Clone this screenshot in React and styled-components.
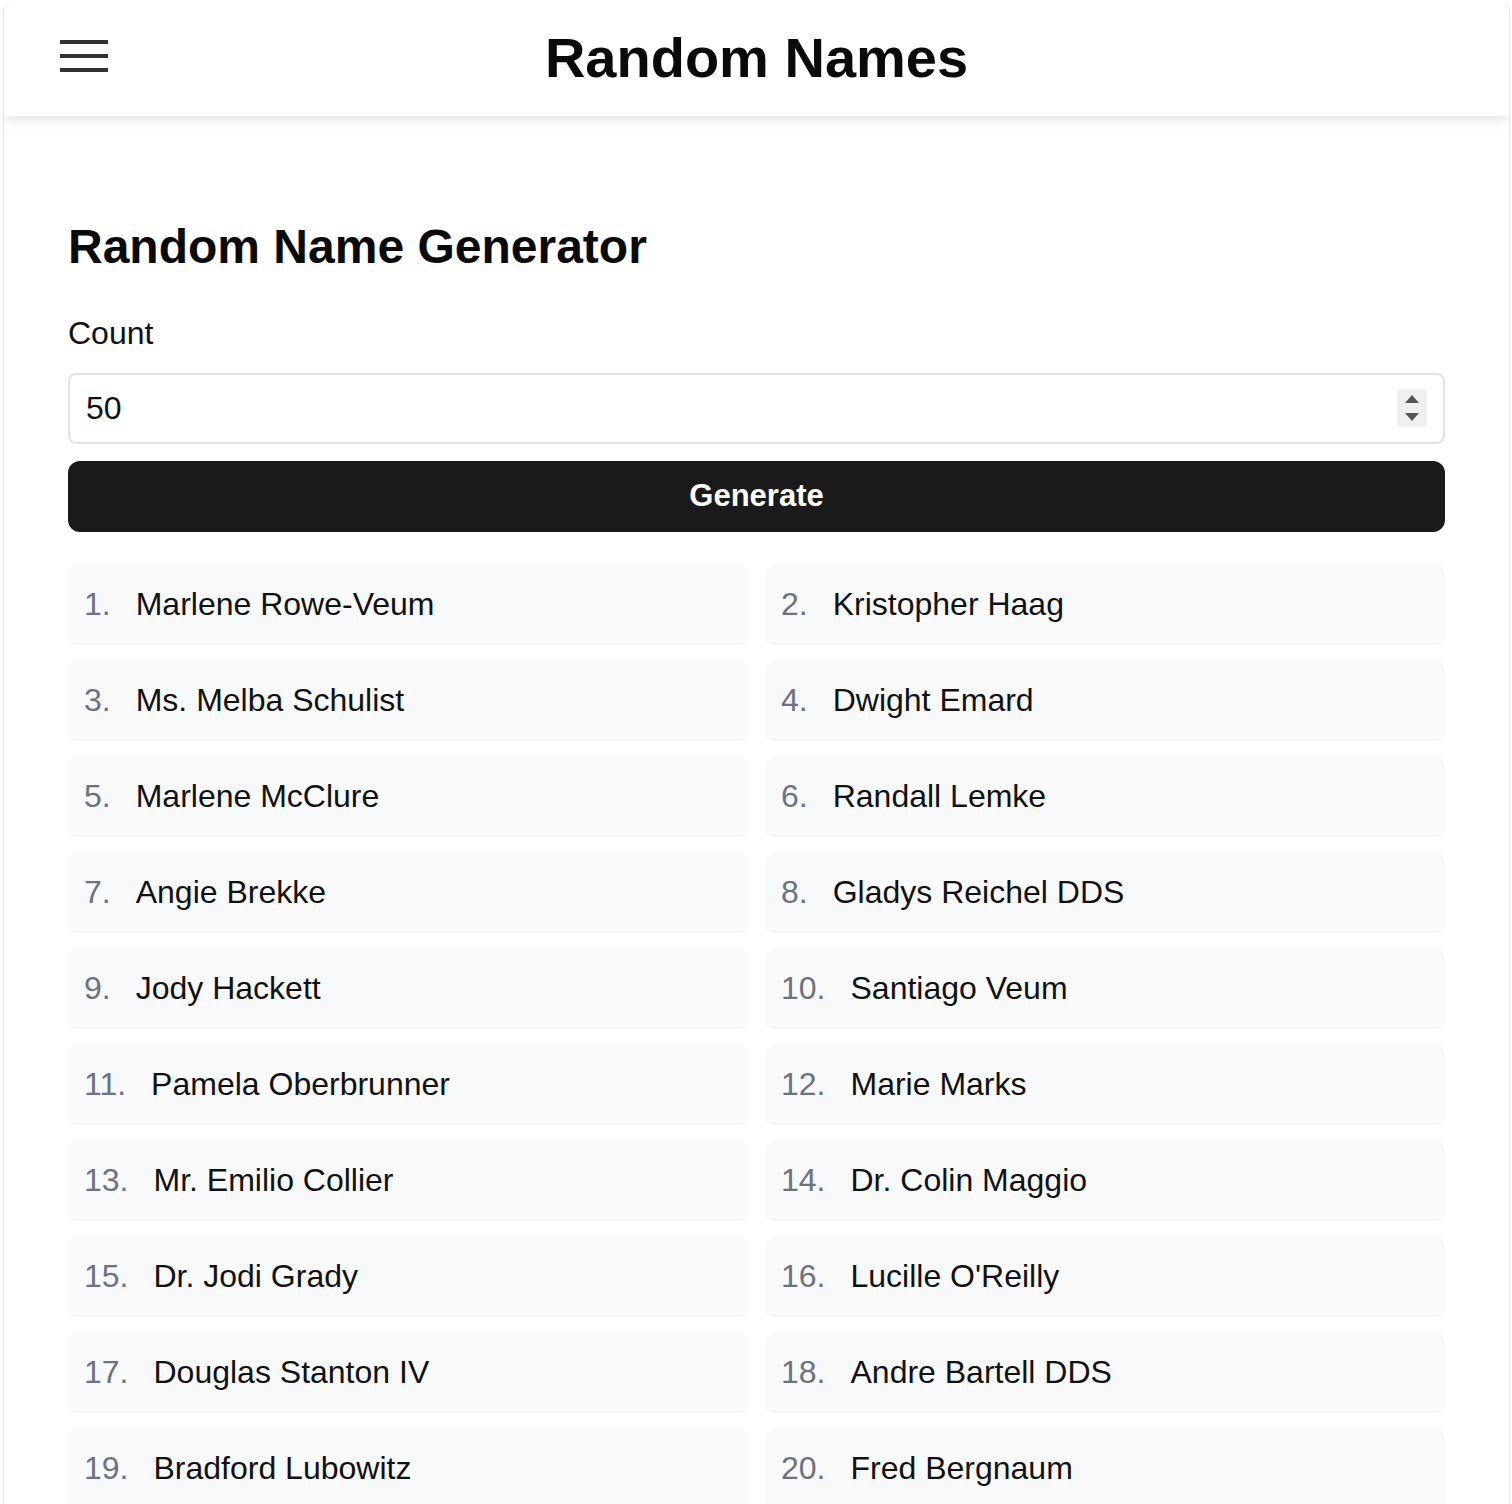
import React, { useState } from 'react';
import styled, { createGlobalStyle } from 'styled-components';

const GlobalStyle = createGlobalStyle`
  body {
    margin: 0;
    background: #ffffff;
    font-family: "Liberation Sans", Arial, Helvetica, sans-serif;
    color: #111111;
  }
  * { box-sizing: border-box; }
`;

const Frame = styled.div`
  margin: 0 2px 0 3px;
  min-height: 100vh;
  border: 1px solid #e6e6e6;
  border-top: none;
  border-bottom: none;
  border-radius: 12px 12px 0 0;
  background: #ffffff;
  overflow: hidden;
`;

const Header = styled.header`
  position: relative;
  height: 116px;
  display: grid;
  grid-template-columns: 1fr auto 1fr;
  align-items: center;
  padding: 0 56px;
  background: #ffffff;
  box-shadow: 0 3px 12px rgba(0, 0, 0, 0.12);
`;

const MenuButton = styled.button`
  justify-self: start;
  display: flex;
  padding: 0 0 4px;
  border: none;
  background: none;
  cursor: pointer;
`;

const Title = styled.h1`
  margin: 0;
  font-size: 56px;
  font-weight: 700;
  line-height: 1;
  color: #0a0a0a;
`;

const Main = styled.main`
  padding: 102px 64px 64px;
`;

const Heading = styled.h2`
  margin: 0 0 38px;
  font-size: 48px;
  line-height: 1.2;
  font-weight: 700;
  color: #0a0a0a;
`;

const Label = styled.label`
  display: block;
  margin-bottom: 21px;
  font-size: 32px;
  line-height: 1.2;
  color: #111111;
`;

const InputBox = styled.div`
  display: flex;
  align-items: center;
  height: 71px;
  padding: 0 16px;
  border: 2px solid #e3e3e3;
  border-radius: 8px;
  background: #ffffff;
`;

const NumberInput = styled.input`
  flex: 1;
  min-width: 0;
  border: none;
  outline: none;
  background: transparent;
  font-family: inherit;
  font-size: 32px;
  color: #111111;
  padding: 0;
`;

const Spinner = styled.div`
  width: 30px;
  height: 38px;
  display: flex;
  flex-direction: column;
  align-items: center;
  justify-content: center;
  gap: 10px;
  background: #efefef;
`;

const Arrow = styled.span`
  width: 0;
  height: 0;
  border-left: 7px solid transparent;
  border-right: 7px solid transparent;
  ${p => (p.$up ? 'border-bottom: 8px solid #555555;' : 'border-top: 8px solid #555555;')}
`;

const GenerateButton = styled.button`
  display: block;
  width: 100%;
  height: 71px;
  margin-top: 17px;
  border: none;
  border-radius: 12px;
  background: #1a1a1a;
  color: #ffffff;
  font-family: inherit;
  font-size: 31px;
  font-weight: 700;
  cursor: pointer;
`;

const NameGrid = styled.ol`
  list-style: none;
  margin: 33px 0 0;
  padding: 0;
  display: grid;
  grid-template-columns: 1fr 1fr;
  column-gap: 17px;
  row-gap: 16px;
`;

const NameItem = styled.li`
  display: flex;
  align-items: center;
  height: 80px;
  padding: 0 16px;
  border-radius: 8px;
  background: #f8f9fb;
  font-size: 32px;
`;

const Index = styled.span`
  margin-right: 25px;
  color: #6b7282;
`;

const Name = styled.span`
  color: #111111;
`;

const names = [
  'Marlene Rowe-Veum', 'Kristopher Haag', 'Ms. Melba Schulist', 'Dwight Emard',
  'Marlene McClure', 'Randall Lemke', 'Angie Brekke', 'Gladys Reichel DDS',
  'Jody Hackett', 'Santiago Veum', 'Pamela Oberbrunner', 'Marie Marks',
  'Mr. Emilio Collier', 'Dr. Colin Maggio', 'Dr. Jodi Grady', "Lucille O'Reilly",
  'Douglas Stanton IV', 'Andre Bartell DDS', 'Bradford Lubowitz', 'Fred Bergnaum',
  'Tracy Kuhlman', 'Rosa Wintheiser', 'Ernesto Kub', 'Mrs. Lela Schmitt',
  'Wilbur Dicki', 'Sheila Larkin', 'Jerome Hilpert', 'Nora Gutmann',
  'Lowell Bauch', 'Dr. Irma Kihn', 'Clayton Rath', 'Brandy Ondricka',
  'Ruben Lind', 'Mattie Stokes', 'Kurt Pfannerstill', 'Opal Cronin',
  'Nelson Tromp', 'Miss Vivian Hane', 'Herman Wunsch', 'Lorena Ziemann',
  'Shawn Heller', 'Essie Bogan', 'Darnell Kling', 'Velma Runolfsdottir',
  'Gustavo Waters', 'Ida Koelpin', 'Jake Hessel', 'Alberta Mante',
  'Rudy Schaden Jr.', 'Wanda Harvey',
];

function MenuIcon() {
  return (
    <svg width="48" height="32" viewBox="0 0 48 32" aria-hidden="true">
      <rect x="0" y="0" width="48" height="4" fill="#333333" />
      <rect x="0" y="14" width="48" height="4" fill="#333333" />
      <rect x="0" y="28" width="48" height="4" fill="#333333" />
    </svg>
  );
}

export default function App() {
  const [count, setCount] = useState(50);

  return (
    <>
      <GlobalStyle />
      <Frame>
        <Header>
          <MenuButton aria-label="Menu">
            <MenuIcon />
          </MenuButton>
          <Title>Random Names</Title>
          <span />
        </Header>
        <Main>
          <Heading>Random Name Generator</Heading>
          <Label htmlFor="count">Count</Label>
          <InputBox>
            <NumberInput
              id="count"
              type="text"
              value={count}
              onChange={e => setCount(e.target.value)}
            />
            <Spinner>
              <Arrow $up />
              <Arrow />
            </Spinner>
          </InputBox>
          <GenerateButton>Generate</GenerateButton>
          <NameGrid>
            {names.slice(0, Number(count) || 0).map((n, i) => (
              <NameItem key={i}>
                <Index>{i + 1}.</Index>
                <Name>{n}</Name>
              </NameItem>
            ))}
          </NameGrid>
        </Main>
      </Frame>
    </>
  );
}
